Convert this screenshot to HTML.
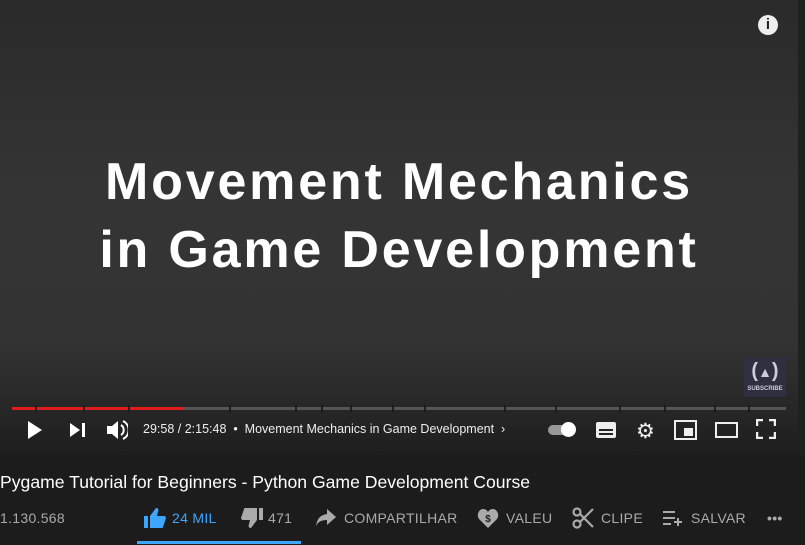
<!DOCTYPE html>
<html><head><style>
body{margin:0;width:805px;height:545px;background:#1c1c1c;font-family:"Liberation Sans",sans-serif;overflow:hidden;position:relative;color:#fff}
.vid{position:absolute;left:0;top:0;width:798px;height:455px;background:linear-gradient(#2a2a2a 0%,#343434 40%,#333 75%,#1e1e1e 100%)}
.edge{position:absolute;left:798px;top:0;width:7px;height:455px;background:#202020}
.big{position:absolute;left:0;width:798px;text-align:center;font-weight:bold;font-size:52px;letter-spacing:2.8px}
.ab{position:absolute}
.seg{position:absolute;top:407px;height:3px;background:#666}
.ctl{position:absolute;top:422px;font-size:12.5px;color:#eee}
.bt{position:absolute;top:510px;font-size:14px;color:#aaa;letter-spacing:0.3px}
</style></head><body>
<div class="vid"></div><div class="edge"></div>
<div class="ab" style="left:758px;top:15px;width:20px;height:20px;border-radius:50%;background:#eee;color:#222;font-weight:bold;font-size:15px;text-align:center;line-height:20px">i</div>
<div class="big" style="top:152px">Movement Mechanics</div>
<div class="big" style="top:220px">in Game Development</div>
<div class="ab" style="left:744px;top:357px;width:42px;height:40px;background:#2e3040;color:#ccd;text-align:center;font-size:20px;font-weight:bold;line-height:28px">(<span style="font-size:14px">▲</span>)<div style="font-size:6px;line-height:6px">SUBSCRIBE</div></div>
<div class="seg" style="left:12px;width:774px;background:#555"></div>
<div class="seg" style="left:12px;width:171px;background:#e21b1b"></div>
<svg class="ab" style="left:0;top:405px" width="805" height="8"><g stroke="#1e1e1e" stroke-width="2"><path d="M36 0v8M84 0v8M129 0v8M230 0v8M296 0v8M322 0v8M351 0v8M393 0v8M425 0v8M505 0v8M556 0v8M620 0v8M665 0v8M715 0v8M749 0v8"/></g></svg>
<svg class="ab" style="left:25px;top:420px" width="20" height="20"><path d="M3 1L17 10L3 19Z" fill="#fff"/></svg>
<svg class="ab" style="left:69px;top:422px" width="18" height="16"><path d="M1 1L11 8L1 15ZM13 1h3v14h-3z" fill="#fff"/></svg>
<svg class="ab" style="left:106px;top:419px" width="22" height="22"><path d="M1 7h5l6-5v18l-6-5H1z" fill="#fff"/><path d="M15 6a6 6 0 0 1 0 10M17 2a10 10 0 0 1 0 18" stroke="#fff" stroke-width="2" fill="none"/></svg>
<div class="ctl" style="left:143px">29:58 / 2:15:48 &nbsp;•&nbsp; Movement Mechanics in Game Development &nbsp;›</div>
<div class="ab" style="left:548px;top:425px;width:22px;height:10px;border-radius:5px;background:#999"></div>
<div class="ab" style="left:561px;top:422px;width:15px;height:15px;border-radius:50%;background:#fff"></div>
<div class="ab" style="left:596px;top:422px;width:20px;height:16px;border-radius:2px;background:#eee"></div>
<div class="ab" style="left:599px;top:429px;width:14px;height:2px;background:#222"></div><div class="ab" style="left:599px;top:433px;width:14px;height:2px;background:#222"></div>
<div class="ab" style="left:636px;top:419px;font-size:21px;color:#eee">⚙</div>
<div class="ab" style="left:674px;top:420px;width:19px;height:16px;border:2px solid #eee"></div><div class="ab" style="left:684px;top:428px;width:9px;height:8px;background:#eee"></div>
<div class="ab" style="left:715px;top:422px;width:19px;height:12px;border:2px solid #eee"></div>
<svg class="ab" style="left:756px;top:419px" width="20" height="20"><path d="M1 7V1h6M13 1h6v6M19 13v6h-6M7 19H1v-6" stroke="#eee" stroke-width="2.5" fill="none"/></svg>
<div class="ab" style="left:0;top:472px;font-size:17.6px;color:#fff">Pygame Tutorial for Beginners - Python Game Development Course</div>
<div class="bt" style="left:0">1.130.568</div>
<svg class="ab" style="left:143px;top:507px" width="24" height="22"><path d="M1 9h4v12H1zM7 9l6-8c2 0 3 1 2 4l-1 4h7c1 0 2 1 2 2l-3 9c0 1-1 1-2 1H7z" fill="#3ea6ff"/></svg>
<div class="bt" style="left:172px;color:#3ea6ff">24 MIL</div>
<svg class="ab" style="left:240px;top:507px" width="24" height="22"><path d="M19 1h4v12h-4zM17 13l-6 8c-2 0-3-1-2-4l1-4H3c-1 0-2-1-2-2l3-9c0-1 1-1 2-1h11z" fill="#aaa"/></svg>
<div class="bt" style="left:268px">471</div>
<svg class="ab" style="left:315px;top:508px" width="22" height="20"><path d="M12 1l9 8-9 8v-5C6 12 3 14 1 18 2 11 5 7 12 6z" fill="#aaa"/></svg>
<div class="bt" style="left:344px">COMPARTILHAR</div>
<svg class="ab" style="left:477px;top:507px" width="22" height="22"><path d="M11 21L2 12C-1 8 2 2 6 2c2 0 4 1 5 3 1-2 3-3 5-3 4 0 7 6 4 10z" fill="#aaa"/><text x="11" y="15" font-size="10" font-weight="bold" fill="#1c1c1c" text-anchor="middle">$</text></svg>
<div class="bt" style="left:506px">VALEU</div>
<svg class="ab" style="left:572px;top:507px" width="22" height="22"><g stroke="#aaa" stroke-width="2.2" fill="none"><circle cx="5" cy="5" r="3.5"/><circle cx="5" cy="17" r="3.5"/><path d="M8 7l13 13M8 15L21 2"/></g></svg>
<div class="bt" style="left:601px">CLIPE</div>
<svg class="ab" style="left:662px;top:509px" width="22" height="18"><path d="M1 3h12M1 9h12M1 15h8M12 13h8M16 9v8" stroke="#aaa" stroke-width="2"/></svg>
<div class="bt" style="left:691px">SALVAR</div>
<div class="bt" style="left:767px;font-weight:bold">•••</div>
<div class="ab" style="left:137px;top:541px;width:164px;height:3px;background:#3ea6ff"></div>
</body></html>
